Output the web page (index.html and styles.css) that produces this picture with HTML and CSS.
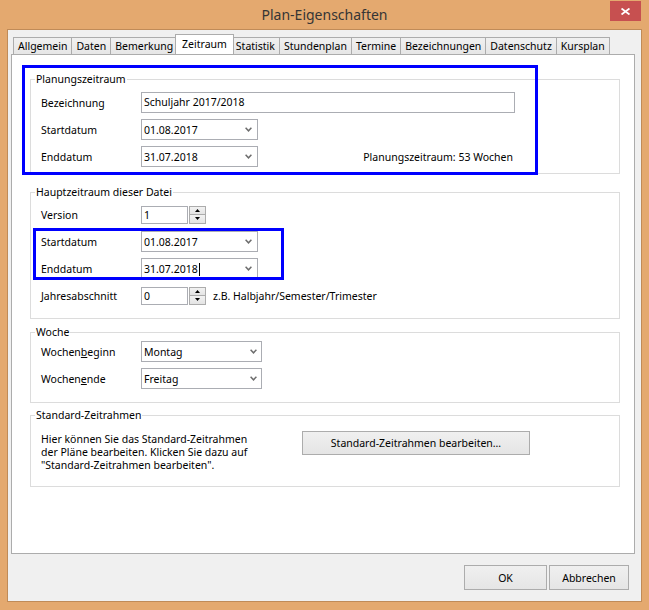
FILE: index.html
```html
<!DOCTYPE html>
<html lang="de">

<head>
  <meta charset="UTF-8">
  <title>Plan-Eigenschaften</title>
  <link rel="stylesheet" href="styles.css">
</head>

<body>
  <div class="window">
    <div class="titlebar">
      <span></span>
      <div class="title">Plan-Eigenschaften</div>
      <button class="close">
        <svg width="9" height="7" viewBox="0 0 9 7"><path d="M0.5 0.5 L8.5 6.5 M8.5 0.5 L0.5 6.5" stroke="#fff" stroke-width="1.8" fill="none"/></svg>
      </button>
    </div>

    <div class="client">
      <div class="tabs">
        <div class="tab">Allgemein</div>
        <div class="tab">Daten</div>
        <div class="tab">Bemerkung</div>
        <div class="tab active">Zeitraum</div>
        <div class="tab">Statistik</div>
        <div class="tab">Stundenplan</div>
        <div class="tab">Termine</div>
        <div class="tab">Bezeichnungen</div>
        <div class="tab">Datenschutz</div>
        <div class="tab">Kursplan</div>
      </div>

      <div class="panel">
        <div class="group g-plan">
          <div class="group-title">Planungszeitraum</div>
          <div class="rows">
            <div class="row">
              <label>Bezeichnung</label>
              <div class="textbox">Schuljahr 2017/2018</div>
            </div>
            <div class="row">
              <label>Startdatum</label>
              <div class="combo date"><span>01.08.2017</span><svg class="chev" width="7" height="5" viewBox="0 0 7 5"><path d="M0.6 0.8 L3.5 3.8 L6.4 0.8" stroke="#6d6d6d" stroke-width="1.5" fill="none"/></svg></div>
            </div>
            <div class="row">
              <label>Enddatum</label>
              <div class="combo date"><span>31.07.2018</span><svg class="chev" width="7" height="5" viewBox="0 0 7 5"><path d="M0.6 0.8 L3.5 3.8 L6.4 0.8" stroke="#6d6d6d" stroke-width="1.5" fill="none"/></svg></div>
              <span class="info">Planungszeitraum: 53 Wochen</span>
            </div>
          </div>
        </div>

        <div class="group g-haupt">
          <div class="group-title">Hauptzeitraum dieser Datei</div>
          <div class="rows">
            <div class="row">
              <label>Version</label>
              <div class="spin">
                <div class="spin-text">1</div>
                <div class="spin-btns">
                  <div class="spin-btn"><svg width="5" height="3" viewBox="0 0 5 3"><path d="M0 3 L2.5 0 L5 3 Z" fill="#000"/></svg></div>
                  <div class="spin-btn"><svg width="5" height="3" viewBox="0 0 5 3"><path d="M0 0 L2.5 3 L5 0 Z" fill="#000"/></svg></div>
                </div>
              </div>
            </div>
            <div class="row">
              <label>Startdatum</label>
              <div class="combo date"><span>01.08.2017</span><svg class="chev" width="7" height="5" viewBox="0 0 7 5"><path d="M0.6 0.8 L3.5 3.8 L6.4 0.8" stroke="#6d6d6d" stroke-width="1.5" fill="none"/></svg></div>
            </div>
            <div class="row">
              <label>Enddatum</label>
              <div class="combo date"><span>31.07.2018<span class="caret"></span></span><svg class="chev" width="7" height="5" viewBox="0 0 7 5"><path d="M0.6 0.8 L3.5 3.8 L6.4 0.8" stroke="#6d6d6d" stroke-width="1.5" fill="none"/></svg></div>
            </div>
            <div class="row">
              <label>Jahresabschnitt</label>
              <div class="spin">
                <div class="spin-text">0</div>
                <div class="spin-btns">
                  <div class="spin-btn"><svg width="5" height="3" viewBox="0 0 5 3"><path d="M0 3 L2.5 0 L5 3 Z" fill="#000"/></svg></div>
                  <div class="spin-btn"><svg width="5" height="3" viewBox="0 0 5 3"><path d="M0 0 L2.5 3 L5 0 Z" fill="#000"/></svg></div>
                </div>
              </div>
              <span class="hint">z.B. Halbjahr/Semester/Trimester</span>
            </div>
          </div>
        </div>

        <div class="group g-woche">
          <div class="group-title">Woche</div>
          <div class="rows">
            <div class="row">
              <label>Wochen<u>b</u>eginn</label>
              <div class="combo week"><span>Montag</span><svg class="chev" width="7" height="5" viewBox="0 0 7 5"><path d="M0.6 0.8 L3.5 3.8 L6.4 0.8" stroke="#6d6d6d" stroke-width="1.5" fill="none"/></svg></div>
            </div>
            <div class="row">
              <label>Wochen<u>e</u>nde</label>
              <div class="combo week"><span>Freitag</span><svg class="chev" width="7" height="5" viewBox="0 0 7 5"><path d="M0.6 0.8 L3.5 3.8 L6.4 0.8" stroke="#6d6d6d" stroke-width="1.5" fill="none"/></svg></div>
            </div>
          </div>
        </div>

        <div class="group g-std">
          <div class="group-title">Standard-Zeitrahmen</div>
          <div class="std-body">
            <div class="std-text">Hier können Sie das Standard-Zeitrahmen<br>der Pläne bearbeiten. Klicken Sie dazu auf<br>"Standard-Zeitrahmen bearbeiten".</div>
            <button class="btn btn-std">Standard-Zeitrahmen bearbeiten…</button>
          </div>
        </div>

        <div class="mark mark-plan"></div>
        <div class="mark mark-haupt"></div>
      </div>

      <div class="footer">
        <button class="btn btn-ok">OK</button>
        <button class="btn btn-cancel">Abbrechen</button>
      </div>
    </div>
  </div>
</body>

</html>
```

FILE: styles.css
```css
* {
  margin: 0;
  padding: 0;
  box-sizing: border-box;
}

body {
  font-family: "Noto Sans", "Open Sans", sans-serif;
  font-size: 10.5px;
  color: #000;
  background: #fff;
}

.window {
  width: 649px;
  height: 610px;
  background: #e4a96f;
  padding: 0 7px 8px;
  display: flex;
  flex-direction: column;
}

.titlebar {
  height: 29px;
  display: grid;
  grid-template-columns: 1fr auto 1fr;
  align-items: start;
}

.title {
  font-size: 14px;
  line-height: 30px;
  color: #353535;
}

.close {
  justify-self: end;
  width: 31px;
  height: 20px;
  margin: 1px 1px 0 0;
  border: none;
  background: #c75050;
  display: flex;
  align-items: center;
  justify-content: center;
}

.client {
  flex: 1;
  background: #f0f0f0;
  border: 1px solid #c08b58;
  display: flex;
  flex-direction: column;
}

/* tabs */
.tabs {
  height: 24px;
  display: flex;
  align-items: flex-end;
  padding-left: 5px;
}

.tab {
  height: 17px;
  padding: 0 4px;
  margin-right: -1px;
  border: 1px solid #acacac;
  border-bottom: none;
  background: linear-gradient(#f0f0f0, #e6e6e6);
  line-height: 16px;
  white-space: nowrap;
}

.tab.active {
  position: relative;
  height: 21px;
  padding: 0 6px;
  margin: 0 -3px -1px -2px;
  background: #fff;
  line-height: 18px;
}

.panel {
  position: relative;
  height: 500px;
  margin: 0 6px 0 3px;
  padding-top: 24px;
  background: #fff;
  border: 1px solid #acacac;
}

/* group boxes */
.group {
  margin: 0 14px 0 18px;
  border: 1px solid #dcdcdc;
}

.g-haupt {
  margin-top: 18px;
}

.g-woche {
  margin-top: 13px;
}

.g-std {
  margin-top: 12px;
}

.group-title {
  width: fit-content;
  margin: -7px 0 0 4px;
  padding: 0 1px;
  background: #fff;
  line-height: 13px;
}

.rows {
  display: flex;
  flex-direction: column;
  gap: 6px;
  padding: 6px 104px 6px 10px;
}

.g-haupt .rows {
  padding-top: 5px;
  padding-bottom: 12px;
}

.g-woche .rows {
  padding-top: 2px;
  padding-bottom: 13px;
}

.row {
  height: 21px;
  display: flex;
  align-items: center;
}

.row label {
  width: 100px;
  flex-shrink: 0;
}

.textbox {
  flex: 1;
  height: 21px;
  padding-left: 2px;
  border: 1px solid #abadb3;
  background: #fff;
  line-height: 19px;
}

.combo {
  height: 21px;
  padding: 0 5px 0 2px;
  border: 1px solid #abadb3;
  background: #fff;
  display: flex;
  align-items: center;
  justify-content: space-between;
}

.combo.date {
  width: 117px;
}

.combo.week {
  width: 121px;
  padding-right: 4px;
}

.caret {
  display: inline-block;
  width: 1px;
  height: 13px;
  margin-left: 1px;
  background: #000;
  vertical-align: -3px;
}

.info {
  margin-left: auto;
  margin-right: 2px;
}

.spin {
  display: flex;
  align-items: center;
  gap: 1px;
}

.spin-text {
  width: 47px;
  height: 18px;
  padding-left: 2px;
  border: 1px solid #abadb3;
  background: #fff;
  line-height: 16px;
}

.spin-btns {
  width: 17px;
  height: 18px;
  display: flex;
  flex-direction: column;
}

.spin-btn {
  flex: 1;
  border: 1px solid #acacac;
  background: linear-gradient(#f2f2f2, #e4e4e4);
  display: flex;
  align-items: center;
  justify-content: center;
}

.spin-btn + .spin-btn {
  border-top: none;
}

.hint {
  margin-left: 7px;
}

.std-body {
  display: flex;
  align-items: flex-start;
  padding: 9px 0 14px 10px;
}

.std-text {
  width: 261px;
  margin-top: 2px;
  line-height: 13px;
}

/* buttons */
.btn {
  font: inherit;
  color: #000;
  border: 1px solid #acacac;
  background: linear-gradient(#f0f0f0, #e5e5e5);
}

.btn-std {
  width: 228px;
  height: 24px;
}

.footer {
  display: flex;
  justify-content: flex-end;
  gap: 2px;
  padding: 11px 12px 0 0;
}

.btn-ok {
  width: 83px;
  height: 25px;
}

.btn-cancel {
  width: 80px;
  height: 25px;
}

/* blue annotation frames */
.mark {
  position: absolute;
  border: 3px solid #0000ff;
}

.mark-plan {
  left: 10px;
  top: 10px;
  width: 516px;
  height: 110px;
}

.mark-haupt {
  left: 21px;
  top: 173px;
  width: 251px;
  height: 52px;
}
```
